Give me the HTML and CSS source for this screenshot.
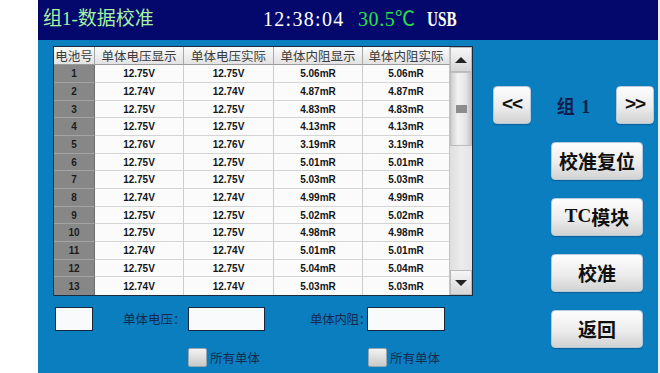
FILE: index.html
```html
<!DOCTYPE html>
<html lang="zh-CN">
<head>
<meta charset="utf-8">
<title>组1-数据校准</title>
<link rel="stylesheet" href="styles.css">
</head>
<body>
<div class="screen">
  <div class="gutter"></div>
  <div class="panel">
    <header class="titlebar">
      <span class="title">组1-数据校准</span>
      <span class="time">12:38:04</span>
      <span class="temp">30.5℃</span>
      <span class="usb">USB</span>
    </header>
    <main class="content">
      <section class="left">
        <div class="table">
          <div class="grid">
            <div class="th">电池号</div><div class="th">单体电压显示</div><div class="th">单体电压实际</div><div class="th">单体内阻显示</div><div class="th last">单体内阻实际</div>

            <div class="no">1</div><div class="td">12.75V</div><div class="td">12.75V</div><div class="td">5.06mR</div><div class="td last">5.06mR</div>
            <div class="no">2</div><div class="td">12.74V</div><div class="td">12.74V</div><div class="td">4.87mR</div><div class="td last">4.87mR</div>
            <div class="no">3</div><div class="td">12.75V</div><div class="td">12.75V</div><div class="td">4.83mR</div><div class="td last">4.83mR</div>
            <div class="no">4</div><div class="td">12.75V</div><div class="td">12.75V</div><div class="td">4.13mR</div><div class="td last">4.13mR</div>
            <div class="no">5</div><div class="td">12.76V</div><div class="td">12.76V</div><div class="td">3.19mR</div><div class="td last">3.19mR</div>
            <div class="no">6</div><div class="td">12.75V</div><div class="td">12.75V</div><div class="td">5.01mR</div><div class="td last">5.01mR</div>
            <div class="no">7</div><div class="td">12.75V</div><div class="td">12.75V</div><div class="td">5.03mR</div><div class="td last">5.03mR</div>
            <div class="no">8</div><div class="td">12.74V</div><div class="td">12.74V</div><div class="td">4.99mR</div><div class="td last">4.99mR</div>
            <div class="no">9</div><div class="td">12.75V</div><div class="td">12.75V</div><div class="td">5.02mR</div><div class="td last">5.02mR</div>
            <div class="no">10</div><div class="td">12.75V</div><div class="td">12.75V</div><div class="td">4.98mR</div><div class="td last">4.98mR</div>
            <div class="no">11</div><div class="td">12.74V</div><div class="td">12.74V</div><div class="td">5.01mR</div><div class="td last">5.01mR</div>
            <div class="no">12</div><div class="td">12.75V</div><div class="td">12.75V</div><div class="td">5.04mR</div><div class="td last">5.04mR</div>
            <div class="no bottom">13</div><div class="td bottom">12.74V</div><div class="td bottom">12.74V</div><div class="td bottom">5.03mR</div><div class="td last bottom">5.03mR</div>
          </div>
          <div class="scrollbar">
            <div class="sb-btn"><span class="tri-up"></span></div>
            <div class="sb-thumb"><span class="grip"></span></div>
            <div class="sb-track"></div>
            <div class="sb-btn"><span class="tri-down"></span></div>
          </div>
        </div>

        <div class="form-row">
          <div class="box small"></div>
          <span class="label label-v">单体电压：</span>
          <div class="box mid"></div>
          <span class="label label-r">单体内阻：</span>
          <div class="box wide"></div>
        </div>

        <div class="check-row">
          <label class="check first"><span class="cb"></span><span class="cb-text">所有单体</span></label>
          <label class="check"><span class="cb"></span><span class="cb-text">所有单体</span></label>
        </div>
      </section>

      <aside class="right">
        <div class="nav-row">
          <div class="btn nav">&lt;&lt;</div>
          <span class="group">组 1</span>
          <div class="btn nav">&gt;&gt;</div>
        </div>
        <div class="btn action">校准复位</div>
        <div class="btn action"><span class="latin">TC</span>模块</div>
        <div class="btn action">校准</div>
        <div class="btn action">返回</div>
      </aside>
    </main>
  </div>
  <div class="edge"></div>
</div>
</body>
</html>
```

FILE: styles.css
```css
* { box-sizing: border-box; }

body {
  margin: 0;
  width: 660px;
  height: 373px;
  overflow: hidden;
  background: #ffffff;
  font-family: "Noto Sans CJK SC", "Liberation Sans", sans-serif;
}

.screen {
  display: flex;
  height: 373px;
}

.gutter {
  width: 38px;
  flex: 0 0 38px;
  background: #ffffff;
}

.edge {
  width: 2px;
  flex: 0 0 2px;
  background: #e6eef3;
}

.panel {
  width: 620px;
  flex: 0 0 620px;
  background: #0b7ec0;
  display: flex;
  flex-direction: column;
}

/* ---------- title bar ---------- */
.titlebar {
  height: 40px;
  flex: 0 0 40px;
  background: #04086c;
  display: flex;
  align-items: center;
  padding: 0 0 3px 5px;
  white-space: nowrap;
}

.title {
  width: 220px;
  color: #a4f2a4;
  font-family: "Liberation Serif", "Noto Sans CJK SC", serif;
  font-size: 19px;
  line-height: 22px;
}

.time {
  width: 95px;
  color: #ffffff;
  font-family: "Liberation Serif", serif;
  font-size: 20px;
  letter-spacing: 1.3px;
  line-height: 22px;
}

.temp {
  width: 69px;
  color: #27e04a;
  font-family: "Liberation Serif", serif;
  font-size: 20px;
  letter-spacing: 0.6px;
  line-height: 22px;
}

.usb {
  display: inline-block;
  color: #ffffff;
  font-family: "Liberation Serif", serif;
  font-weight: bold;
  font-size: 20px;
  line-height: 22px;
  transform: scaleX(0.76);
  transform-origin: left center;
}

/* ---------- content ---------- */
.content {
  flex: 1;
  display: flex;
}

.left {
  width: 435px;
  flex: 0 0 435px;
  padding: 6px 0 0 15px;
}

/* ---------- table ---------- */
.table {
  width: 420px;
  height: 250px;
  border: 1px solid #1b2b3d;
  display: flex;
  background: #fafafa;
}

.grid {
  width: 396px;
  display: grid;
  grid-template-columns: 41px 89px 90px 89px 87px;
  grid-template-rows: 18px 18px 18px 17px 18px 18px 17px 18px 18px 17px 18px 18px 17px 18px;
}

.th {
  background: linear-gradient(#fbfbfb, #e2e2e2);
  border-right: 1px solid #a8a8a8;
  border-bottom: 1px solid #9c9c9c;
  color: #3c3c3c;
  font-size: 12.5px;
  line-height: 17px;
  text-align: center;
  white-space: nowrap;
  overflow: visible;
}

.no {
  background: #878787;
  border-right: 1px solid #6e6e6e;
  border-bottom: 1px solid #a3a3a3;
  color: #1c1c1c;
  font-family: "Liberation Sans", sans-serif;
  font-weight: bold;
  font-size: 10px;
  display: flex;
  align-items: center;
  justify-content: center;
}

.td {
  background: #fbfbfb;
  border-right: 1px solid #cdcdcd;
  border-bottom: 1px solid #d4d4d4;
  color: #141414;
  font-family: "Liberation Sans", sans-serif;
  font-weight: bold;
  font-size: 10px;
  display: flex;
  align-items: center;
  justify-content: center;
}

.td.last,
.th.last {
  border-right: 1px solid #c4c4c4;
}

.bottom {
  border-bottom: none;
}

/* ---------- scrollbar ---------- */
.scrollbar {
  width: 22px;
  display: flex;
  flex-direction: column;
  background: linear-gradient(to right, #dedede, #ececec 50%, #e4e4e4);
}

.sb-btn {
  height: 25px;
  flex: 0 0 25px;
  background: linear-gradient(#f6f6f6, #d6d6d6);
  border: 1px solid #b9b9b9;
  display: flex;
  align-items: center;
  justify-content: center;
}

.tri-up {
  width: 0;
  height: 0;
  border-left: 6px solid transparent;
  border-right: 6px solid transparent;
  border-bottom: 6px solid #222;
}

.tri-down {
  width: 0;
  height: 0;
  border-left: 6px solid transparent;
  border-right: 6px solid transparent;
  border-top: 6px solid #222;
}

.sb-thumb {
  height: 74px;
  flex: 0 0 74px;
  background: linear-gradient(to right, #cfcfcf, #f3f3f3 35%, #e4e4e4 75%, #c2c2c2);
  border: 1px solid #bdbdbd;
  display: flex;
  align-items: center;
  justify-content: center;
}

.grip {
  width: 11px;
  height: 8px;
  background: #8d8d8d;
}

.sb-track {
  flex: 1;
}

/* ---------- form ---------- */
.form-row {
  margin-top: 11px;
  height: 24px;
  display: flex;
  align-items: center;
}

.box {
  height: 24px;
  background: #f9fafb;
  border: 1px solid #14273f;
}

.box.small {
  margin-left: 2px;
  width: 38px;
}

.box.mid {
  width: 77px;
}

.box.wide {
  width: 78px;
}

.label {
  color: #142a4d;
  font-size: 12.5px;
  line-height: 16px;
  white-space: nowrap;
}

.label-v {
  margin-left: 30px;
  width: 65px;
}

.label-r {
  margin-left: 45px;
  width: 57px;
  letter-spacing: -0.3px;
}

.check-row {
  margin-top: 17px;
  height: 19px;
  display: flex;
  align-items: center;
}

.check {
  display: flex;
  align-items: center;
  gap: 3px;
}

.check.first {
  margin-left: 135px;
  width: 180px;
}

.cb {
  width: 19px;
  height: 19px;
  border: 1px solid #9aa6ae;
  border-radius: 2px;
  background: linear-gradient(#f2f2f2, #c9c9c9);
}

.cb-text {
  color: #142a4d;
  font-size: 12.5px;
  line-height: 16px;
}

/* ---------- right column ---------- */
.right {
  margin-left: 20px;
  width: 162px;
  padding-top: 46px;
  display: flex;
  flex-direction: column;
}

.nav-row {
  width: 161px;
  height: 38px;
  display: flex;
  align-items: center;
  justify-content: space-between;
}

.btn {
  background: linear-gradient(#fdfdfd, #ececec 55%, #d2d2d2);
  border: 1px solid #b7c9d6;
  border-radius: 4px;
  box-shadow: 0 1px 1px rgba(0, 40, 80, 0.35);
  display: flex;
  align-items: center;
  justify-content: center;
  color: #111;
  white-space: nowrap;
}

.btn.nav {
  width: 38px;
  height: 38px;
  font-family: "Liberation Sans", sans-serif;
  font-weight: bold;
  font-size: 19px;
  letter-spacing: -1px;
  padding-bottom: 2px;
}

.group {
  color: #0e1f4c;
  font-family: "Liberation Serif", "Noto Sans CJK SC", serif;
  font-weight: bold;
  font-size: 18px;
  word-spacing: 2px;
}

.btn.action {
  margin-top: 18px;
  margin-left: 58px;
  width: 92px;
  height: 38px;
  font-family: "Liberation Serif", "Noto Sans CJK SC", serif;
  font-weight: bold;
  font-size: 19px;
  padding-bottom: 2px;
}

.latin {
  font-family: "Liberation Serif", serif;
  font-size: 19px;
}
```
